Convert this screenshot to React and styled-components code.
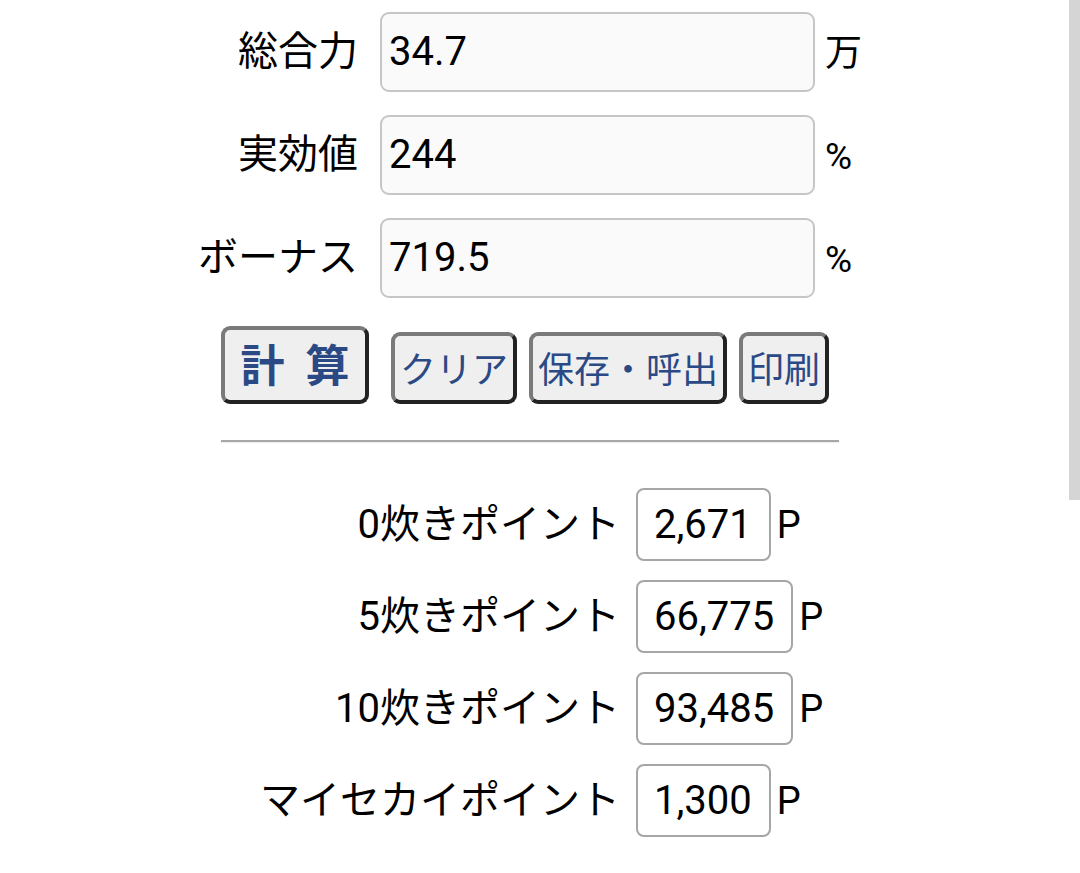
import React from "react";
import styled, { createGlobalStyle } from "styled-components";

const GlobalStyle = createGlobalStyle`
  html, body {
    margin: 0;
    padding: 0;
    background: #ffffff;
  }
  body {
    font-family: "Roboto", "Noto Sans CJK JP", sans-serif;
    color: #000;
  }
`;

const inputs = [
  { label: "総合力", value: "34.7", unit: "万" },
  { label: "実効値", value: "244", unit: "%" },
  { label: "ボーナス", value: "719.5", unit: "%" },
];

const points = [
  { label: "0炊きポイント", value: "2,671" },
  { label: "5炊きポイント", value: "66,775" },
  { label: "10炊きポイント", value: "93,485" },
  { label: "マイセカイポイント", value: "1,300" },
];

export default function App() {
  return (
    <Page>
      <GlobalStyle />
      <Form>
        {inputs.map((row) => (
          <React.Fragment key={row.label}>
            <Label>{row.label}</Label>
            <Field>{row.value}</Field>
            <Unit>{row.unit}</Unit>
          </React.Fragment>
        ))}
      </Form>

      <Buttons>
        <CalcButton>
          <span>計</span>
          <span>算</span>
        </CalcButton>
        <Button>クリア</Button>
        <Button>保存・呼出</Button>
        <Button>印刷</Button>
      </Buttons>

      <Rule />

      <Results>
        {points.map((row) => (
          <React.Fragment key={row.label}>
            <PointLabel>{row.label}</PointLabel>
            <PointCell>
              <PointBox>{row.value}</PointBox>
              <PointUnit>P</PointUnit>
            </PointCell>
          </React.Fragment>
        ))}
      </Results>

      <Thumb />
    </Page>
  );
}

const Page = styled.div`
  min-height: 873px;
  padding: 12px 0 0 190px;
  box-sizing: border-box;
`;

const Form = styled.div`
  display: grid;
  grid-template-columns: 168px 435px auto;
  column-gap: 22px;
  row-gap: 23px;
  align-items: center;
`;

const Label = styled.div`
  font-size: 40px;
  text-align: right;
  white-space: nowrap;
  line-height: 1;
`;

const Field = styled.div`
  height: 80px;
  box-sizing: border-box;
  border: 2px solid #c6c6c6;
  border-radius: 9px;
  background: #fafafa;
  font-size: 40px;
  line-height: 76px;
  padding: 0 7px;
`;

const Unit = styled.div`
  font-size: 37px;
  margin-left: -12px;
  line-height: 1;
  margin-top: 2px;
`;

const Buttons = styled.div`
  display: flex;
  align-items: flex-end;
  gap: 12px;
  margin: 28px 0 0 31px;
`;

const Button = styled.button`
  font-family: "Roboto", "Noto Sans CJK JP", sans-serif;
  font-size: 36px;
  line-height: 52px;
  height: 72px;
  padding: 9px 5px 3px;
  box-sizing: border-box;
  white-space: nowrap;
  color: #2b4a85;
  background: #efefef;
  border: 4px solid;
  border-color: #7a7a7a #222222 #222222 #7a7a7a;
  border-radius: 9px;
  cursor: pointer;
`;

const CalcButton = styled(Button)`
  display: flex;
  justify-content: center;
  align-items: center;
  gap: 21px;
  font-size: 44px;
  font-weight: bold;
  height: 78px;
  width: 148px;
  padding: 4px 0 0;
  margin-right: 10px;
`;

const Rule = styled.hr`
  width: 618px;
  margin: 36px 0 0 31px;
  border: none;
  border-top: 2px solid #a8a8a8;
  border-bottom: 1px solid #ececec;
`;

const Results = styled.div`
  display: grid;
  grid-template-columns: 430px auto;
  column-gap: 16px;
  row-gap: 19px;
  align-items: center;
  margin-top: 45px;
`;

const PointLabel = styled.div`
  font-size: 40px;
  text-align: right;
  white-space: nowrap;
  line-height: 1;
`;

const PointCell = styled.div`
  display: flex;
  align-items: center;
`;

const PointBox = styled.div`
  height: 73px;
  box-sizing: border-box;
  border: 2px solid #a6a6a6;
  border-radius: 8px;
  font-size: 40px;
  line-height: 69px;
  padding: 0 17px 0 16px;
`;

const PointUnit = styled.span`
  font-size: 38px;
  margin-left: 6px;
`;

const Thumb = styled.div`
  position: fixed;
  top: 0;
  right: 0;
  width: 11px;
  height: 500px;
  background: #d5d5d5;
`;
